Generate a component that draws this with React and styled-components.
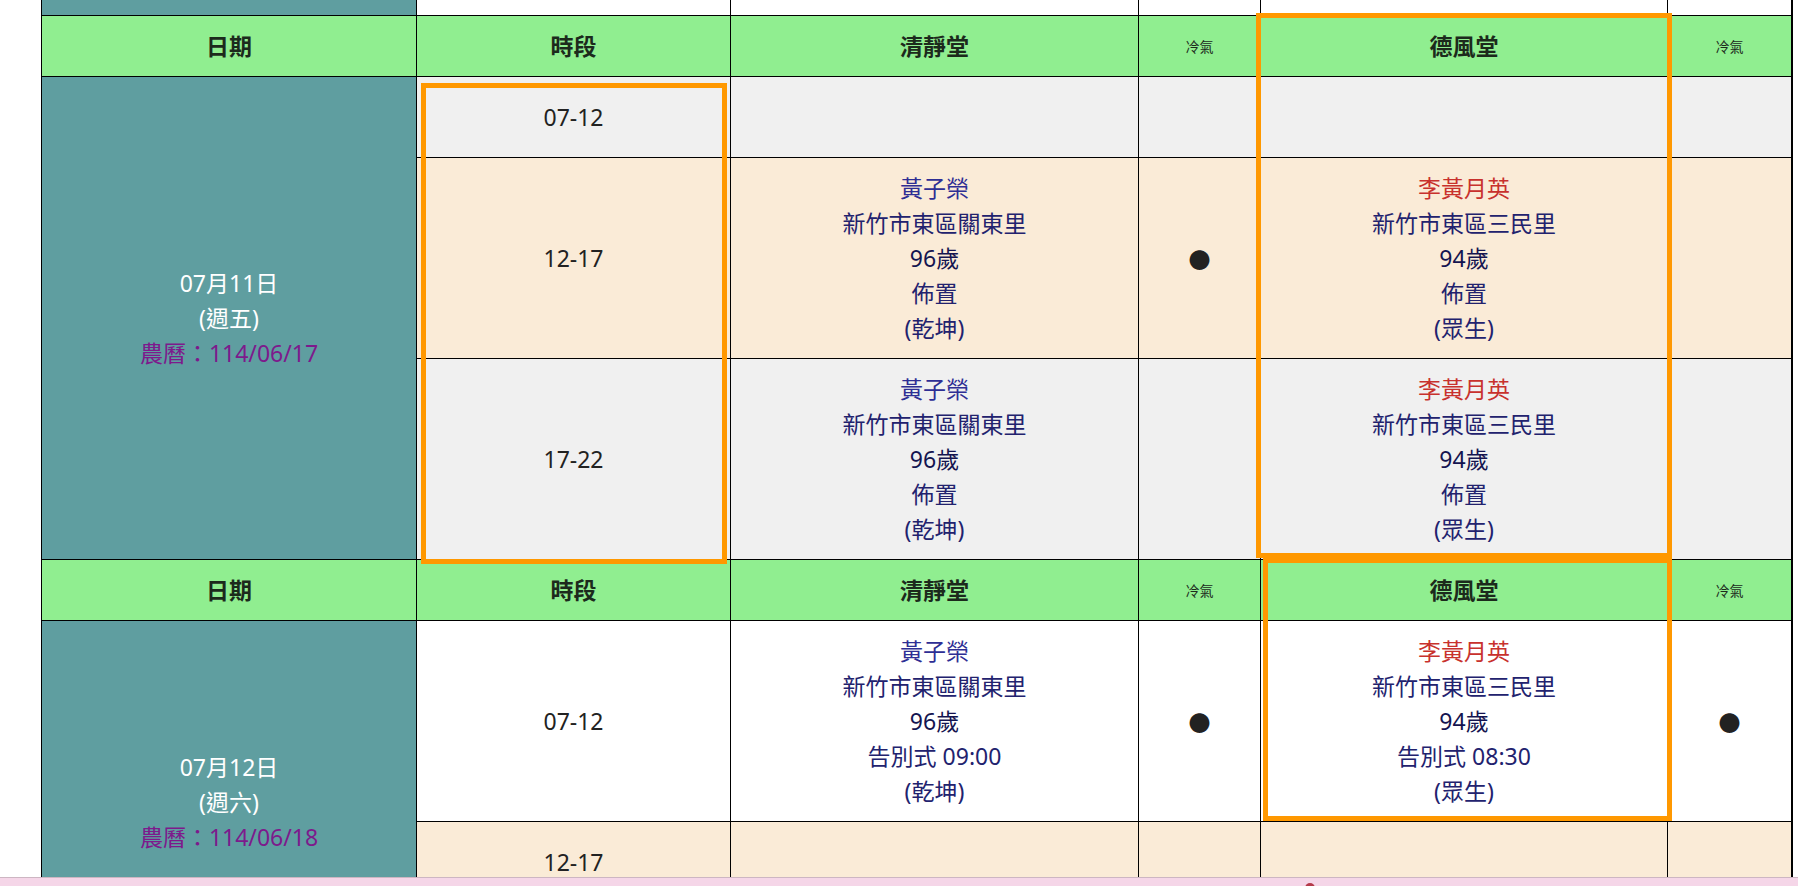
import React from "react";
import styled, { createGlobalStyle } from "styled-components";

const GlobalStyle = createGlobalStyle`
  html, body {
    margin: 0;
    padding: 0;
    overflow: hidden;
    background: #ffffff;
  }
  body {
    font-family: "Noto Sans", "Noto Sans CJK TC", sans-serif;
    color: #222;
  }
`;

const Page = styled.div`
  position: relative;
  padding-left: 41px;
  height: 886px;
  overflow: hidden;
`;

const Grid = styled.div`
  display: grid;
  grid-template-columns: 375px 314px 408px 122px 407px 125px;
  grid-template-rows: 16px 61px 81px 201px 201px 61px 201px 81px 81px;
  width: max-content;
  border-left: 1px solid #000;
`;

const Cell = styled.div`
  box-sizing: border-box;
  display: flex;
  flex-direction: column;
  align-items: center;
  justify-content: center;
  text-align: center;
  border-right: ${(p) => (p.$last ? "2px" : "1px")} solid #000;
  border-bottom: 1px solid #000;
  background: ${(p) => p.$bg || "#ffffff"};
  font-size: 23px;
  line-height: 35px;
  overflow: hidden;
`;

const DateCell = styled(Cell)`
  grid-row: span ${(p) => p.$span || 1};
  background: #5f9ea0;
  color: #ffffff;
`;

const Lunar = styled.div`
  color: #7d1a8c;
`;

const HeadCell = styled(Cell)`
  background: #90ee90;
  color: #1c2a1c;
  font-size: ${(p) => (p.$small ? "14px" : "23px")};
  font-weight: ${(p) => (p.$small ? 400 : 700)};
`;

const TimeCell = styled(Cell)`
  color: #222;
`;

const Entry = styled.div`
  display: flex;
  flex-direction: column;
  align-items: center;
  color: #1f1f6b;
`;

const Name = styled.div`
  color: ${(p) => (p.$red ? "#c8312d" : "#2e2e94")};
`;

const Line = styled.div`
  color: ${(p) => (p.$dark ? "#141450" : "#22226e")};
`;

const Dot = styled.span`
  font-family: "Noto Sans CJK TC", sans-serif;
  font-size: 22px;
  color: #222;
`;

const Highlight = styled.div`
  position: absolute;
  box-sizing: border-box;
  left: ${(p) => p.$x}px;
  top: ${(p) => p.$y}px;
  width: ${(p) => p.$w}px;
  height: ${(p) => p.$h}px;
  border: 5px solid #ff9800;
  pointer-events: none;
`;

const FooterBar = styled.div`
  position: fixed;
  left: 0;
  right: 0;
  top: 877px;
  height: 40px;
  background: #f5d6e8;
  border-top: 1px solid #cdb6c2;
`;

const FooterMark = styled.span`
  position: absolute;
  left: 1305px;
  top: 5px;
  width: 10px;
  height: 10px;
  border-radius: 50%;
  background: #b43a4a;
`;

const COLORS = {
  gray: "#f0f0f0",
  beige: "#faebd7",
  white: "#ffffff",
};

const HALLS = [
  { name: "清靜堂", key: "a" },
  { name: "德風堂", key: "b" },
];

const PEOPLE = {
  a: { name: "黃子榮", addr: "新竹市東區關東里", age: "96歲", side: "(乾坤)", red: false },
  b: { name: "李黃月英", addr: "新竹市東區三民里", age: "94歲", side: "(眾生)", red: true },
};

const days = [
  {
    date: "07月11日",
    week: "(週五)",
    lunar: "農曆：114/06/17",
    rows: [
      { time: "07-12", bg: COLORS.gray, a: null, b: null },
      { time: "12-17", bg: COLORS.beige, a: { event: "佈置", ac: true }, b: { event: "佈置", ac: false } },
      { time: "17-22", bg: COLORS.gray, a: { event: "佈置", ac: false }, b: { event: "佈置", ac: false } },
    ],
  },
  {
    date: "07月12日",
    week: "(週六)",
    lunar: "農曆：114/06/18",
    rows: [
      { time: "07-12", bg: COLORS.white, a: { event: "告別式 09:00", ac: true }, b: { event: "告別式 08:30", ac: true } },
      { time: "12-17", bg: COLORS.beige, a: null, b: null },
      { time: "17-22", bg: COLORS.gray, a: null, b: null },
    ],
  },
];

function EntryBlock({ person, event }) {
  return (
    <Entry>
      <Name $red={person.red}>{person.name}</Name>
      <Line>{person.addr}</Line>
      <Line $dark>{person.age}</Line>
      <Line>{event}</Line>
      <Line>{person.side}</Line>
    </Entry>
  );
}

function HeaderRow() {
  return (
    <>
      <HeadCell>日期</HeadCell>
      <HeadCell>時段</HeadCell>
      <HeadCell>清靜堂</HeadCell>
      <HeadCell $small>冷氣</HeadCell>
      <HeadCell>德風堂</HeadCell>
      <HeadCell $small $last>冷氣</HeadCell>
    </>
  );
}

function DayBlock({ day }) {
  return (
    <>
      <HeaderRow />
      {day.rows.map((row, i) => (
        <React.Fragment key={row.time}>
          {i === 0 && (
            <DateCell $span={day.rows.length}>
              <div>{day.date}</div>
              <div>{day.week}</div>
              <Lunar>{day.lunar}</Lunar>
            </DateCell>
          )}
          <TimeCell $bg={row.bg}>{row.time}</TimeCell>
          {HALLS.map((hall, hi) => {
            const slot = row[hall.key];
            return (
              <React.Fragment key={hall.key}>
                <Cell $bg={row.bg}>
                  {slot && <EntryBlock person={PEOPLE[hall.key]} event={slot.event} />}
                </Cell>
                <Cell $bg={row.bg} $last={hi === HALLS.length - 1}>
                  {slot && slot.ac && <Dot>●</Dot>}
                </Cell>
              </React.Fragment>
            );
          })}
        </React.Fragment>
      ))}
    </>
  );
}

export default function App() {
  return (
    <>
      <GlobalStyle />
      <Page>
        <Grid>
          <DateCell />
          <Cell />
          <Cell />
          <Cell />
          <Cell />
          <Cell $last />
          {days.map((d) => (
            <DayBlock key={d.date} day={d} />
          ))}
        </Grid>
        <Highlight $x={421} $y={83} $w={306} $h={481} />
        <Highlight $x={1256} $y={13} $w={416} $h={545} />
        <Highlight $x={1263} $y={558} $w={409} $h={263} />
      </Page>
      <FooterBar>
        <FooterMark />
      </FooterBar>
    </>
  );
}
